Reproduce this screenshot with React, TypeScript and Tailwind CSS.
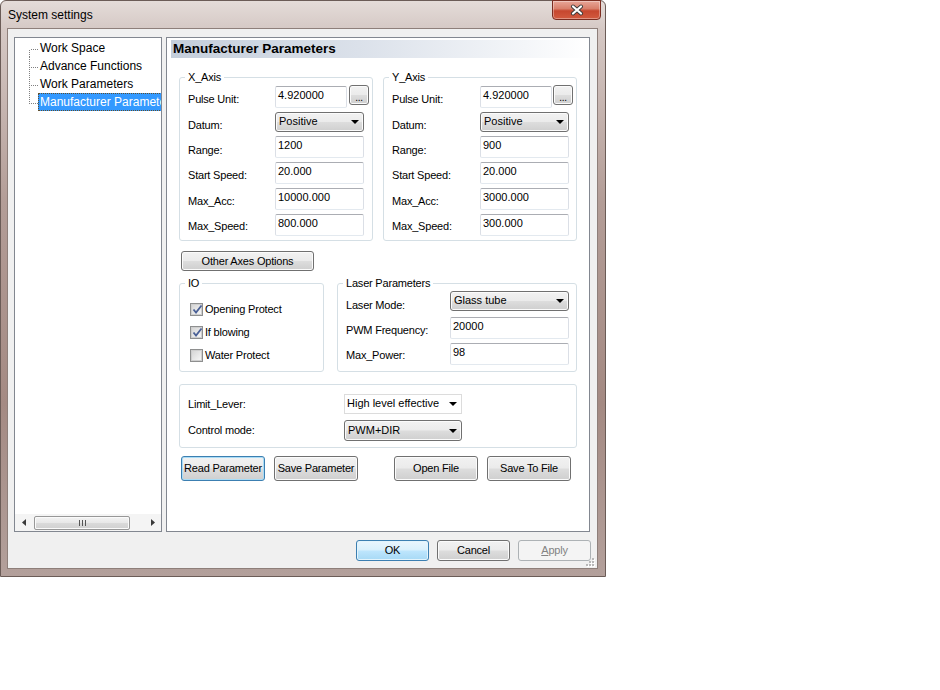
import React from "react";

const btnGray =
  "border border-[#707070] rounded-[3px] bg-[linear-gradient(180deg,#f2f2f2_0%,#ebebeb_48%,#dddddd_52%,#cfcfcf_100%)] shadow-[inset_0_0_0_1px_#fbfbfb]";

function Btn({
  children,
  className = "",
  kind = "normal",
}: {
  children: React.ReactNode;
  className?: string;
  kind?: "normal" | "focus" | "ok" | "disabled";
}) {
  let style = btnGray;
  if (kind === "focus")
    style =
      "border border-[#3c7fb1] rounded-[3px] bg-[linear-gradient(180deg,#f2f2f2_0%,#ebebeb_48%,#dddddd_52%,#cfcfcf_100%)] shadow-[inset_0_0_0_1px_#a9dcf6]";
  if (kind === "ok")
    style =
      "border border-[#3c7fb1] rounded-[3px] bg-[linear-gradient(180deg,#eaf6fd_0%,#d9f0fc_48%,#bee6fd_52%,#a7d9f5_100%)] shadow-[inset_0_0_0_1px_#e3f4fc]";
  if (kind === "disabled")
    style = "border border-[#adb2b5] rounded-[3px] bg-[#f4f4f4] text-[#838383]";
  return (
    <div
      className={`flex shrink-0 items-center justify-center text-[11px] leading-[13px] tracking-[-0.2px] ${style} ${className}`}
    >
      {children}
    </div>
  );
}

function Arrow() {
  return (
    <svg width="8" height="4" viewBox="0 0 8 4" className="shrink-0">
      <path d="M0 0 H8 L4 4 Z" fill="#000" />
    </svg>
  );
}

function Select({
  value,
  className = "",
  flat = false,
}: {
  value: string;
  className?: string;
  flat?: boolean;
}) {
  const look = flat
    ? "border border-[#dcdcdc] bg-white pl-[2px]"
    : "border border-[#707070] rounded-[3px] bg-[linear-gradient(180deg,#f2f2f2_0%,#ebebeb_48%,#dddddd_52%,#cfcfcf_100%)] shadow-[inset_0_0_0_1px_#fbfbfb] pl-[3px]";
  return (
    <div
      className={`flex shrink-0 items-center justify-between pr-[4px] text-[11px] leading-[13px] tracking-normal ${look} ${className}`}
    >
      <span className="mt-[-1px]">{value}</span>
      <Arrow />
    </div>
  );
}

function Input({ value, className = "" }: { value: string; className?: string }) {
  return (
    <div
      className={`h-[22px] shrink-0 rounded-[2px] border border-[#abadb3] border-l-[#dbdfe6] border-r-[#dbdfe6] border-b-[#e3e9ef] bg-white pl-[2px] pt-[2px] text-[11px] leading-[13px] tracking-normal ${className}`}
    >
      {value}
    </div>
  );
}

function Label({ children, w, mt }: { children: React.ReactNode; w: string; mt: string }) {
  return (
    <div className={`shrink-0 whitespace-nowrap leading-[13px] ${w} ${mt}`}>{children}</div>
  );
}

function AxisGroup({
  title,
  labelW,
  btnMl,
  vals,
}: {
  title: string;
  labelW: string;
  btnMl: string;
  vals: string[];
}) {
  return (
    <fieldset className="w-[194px] min-w-0 shrink-0 rounded-[3px] border border-[#d5dfe5] pb-[4px] pl-[8px] pr-[2px] pt-[2px]">
      <legend className="ml-[-3px] px-[3px] leading-[14px]">{title}</legend>
      <div className="flex h-[22px] items-start">
        <Label w={labelW} mt="mt-[7px]">Pulse Unit:</Label>
        <Input value={vals[0]} className="w-[72px]" />
        <Btn className={`mt-[-1px] h-[20px] w-[20px] ${btnMl}`}>
          <span className="mt-[4px] text-[10px]">...</span>
        </Btn>
      </div>
      <div className="mt-[4px] flex h-[20px] items-start">
        <Label w={labelW} mt="mt-[7px]">Datum:</Label>
        <Select value="Positive" className="h-[20px] w-[89px]" />
      </div>
      <div className="mt-[4px] flex h-[22px] items-start">
        <Label w={labelW} mt="mt-[8px]">Range:</Label>
        <Input value={vals[1]} className="w-[89px]" />
      </div>
      <div className="mt-[4px] flex h-[22px] items-start">
        <Label w={labelW} mt="mt-[7px]">Start Speed:</Label>
        <Input value={vals[2]} className="w-[89px]" />
      </div>
      <div className="mt-[4px] flex h-[22px] items-start">
        <Label w={labelW} mt="mt-[7px]">Max_Acc:</Label>
        <Input value={vals[3]} className="w-[89px]" />
      </div>
      <div className="mt-[4px] flex h-[22px] items-start">
        <Label w={labelW} mt="mt-[6px]">Max_Speed:</Label>
        <Input value={vals[4]} className="w-[89px]" />
      </div>
    </fieldset>
  );
}

function Check({ checked }: { checked: boolean }) {
  return (
    <span className="relative flex h-[13px] w-[13px] shrink-0 items-center justify-center border border-[#8e8f8f] bg-[#f4f4f4]">
      <span className="h-[11px] w-[11px] border border-[#cfcfcf] bg-[linear-gradient(135deg,#d6d6d6_0%,#f6f6f6_100%)]" />
      {checked && (
        <svg
          width="11"
          height="11"
          viewBox="0 0 11 11"
          className="absolute left-[1px] top-[0px]"
        >
          <path
            d="M1.5 5.5 L4 8.5 L9.5 1.5"
            fill="none"
            stroke="#4a6096"
            strokeWidth="1.8"
          />
        </svg>
      )}
    </span>
  );
}

function TreeRow({
  label,
  first,
  last,
  selected,
}: {
  label: string;
  first?: boolean;
  last?: boolean;
  selected?: boolean;
}) {
  return (
    <div className="flex h-[18px] items-center whitespace-nowrap pl-[14px]">
      <svg width="9" height="18" viewBox="0 0 9 18" className="shrink-0">
        <line
          x1="0.5"
          y1={first ? 11 : 0}
          x2="0.5"
          y2={last ? 11 : 18}
          stroke="#808080"
          strokeDasharray="1 1"
        />
        <line x1="2" y1="10.5" x2="9" y2="10.5" stroke="#808080" strokeDasharray="1 1" />
      </svg>
      {selected ? (
        <span className="border border-dotted border-[#5f4f2f] bg-[#3399ff] px-[1px] leading-[16px] text-white">
          {label}
        </span>
      ) : (
        <span className="px-[2px] leading-[16px]">{label}</span>
      )}
    </div>
  );
}

function HScroll() {
  return (
    <div className="flex h-[17px] shrink-0 items-center bg-[#f4f4f4]">
      <div className="flex w-[17px] justify-center">
        <svg width="4" height="7" viewBox="0 0 4 7">
          <path d="M4 0 V7 L0 3.5 Z" fill="#3a3a3a" />
        </svg>
      </div>
      <div className="ml-[2px] flex h-[14px] w-[96px] items-center justify-center rounded-[2px] border border-[#979797] bg-[linear-gradient(180deg,#f3f3f3_0%,#e8e8e8_48%,#dadada_52%,#d0d0d0_100%)] shadow-[inset_0_0_0_1px_#fafafa]">
        <svg width="7" height="6" viewBox="0 0 7 6">
          <rect x="0" y="0" width="1" height="6" fill="#555" />
          <rect x="3" y="0" width="1" height="6" fill="#555" />
          <rect x="6" y="0" width="1" height="6" fill="#555" />
        </svg>
      </div>
      <div className="flex-1" />
      <div className="flex w-[17px] justify-center">
        <svg width="4" height="7" viewBox="0 0 4 7">
          <path d="M0 0 V7 L4 3.5 Z" fill="#3a3a3a" />
        </svg>
      </div>
    </div>
  );
}

function Tree() {
  return (
    <div className="flex h-[495px] w-[148px] shrink-0 flex-col border border-[#828790] bg-white">
      <div className="flex-1 overflow-hidden pt-[1px] text-[12px]">
        <TreeRow label="Work Space" first />
        <TreeRow label="Advance Functions" />
        <TreeRow label="Work Parameters" />
        <TreeRow label="Manufacturer Parameters" last selected />
      </div>
      <HScroll />
    </div>
  );
}

function Panel() {
  return (
    <div className="flex h-[495px] w-[424px] shrink-0 flex-col border border-[#828790] bg-white text-[11px] tracking-[-0.2px]">
      <div className="ml-[4px] mr-[1px] mt-[2px] flex h-[18px] items-center bg-[linear-gradient(90deg,#c4cedb_0%,#dbe1ea_45%,#f4f6f9_85%,#ffffff_100%)] pl-[2px] text-[13.5px] font-bold leading-[18px] tracking-normal">
        Manufacturer Parameters
      </div>

      <div className="ml-[12px] mt-[12px] flex gap-[10px]">
        <AxisGroup
          title="X_Axis"
          labelW="w-[87px]"
          btnMl="ml-[2px]"
          vals={["4.920000", "1200", "20.000", "10000.000", "800.000"]}
        />
        <AxisGroup
          title="Y_Axis"
          labelW="w-[88px]"
          btnMl="ml-[1px]"
          vals={["4.920000", "900", "20.000", "3000.000", "300.000"]}
        />
      </div>

      <Btn className="ml-[14px] mt-[10px] h-[20px] w-[133px]">Other Axes Options</Btn>

      <div className="ml-[12px] mt-[5px] flex gap-[13px]">
        <fieldset className="w-[145px] min-w-0 shrink-0 rounded-[3px] border border-[#d5dfe5] px-[8px] pb-[4px] pt-[8px]">
          <legend className="ml-[-3px] px-[3px] leading-[14px]">IO</legend>
          {[
            ["Opening Protect", true],
            ["If blowing", true],
            ["Water Protect", false],
          ].map(([t, c]) => (
            <div key={t as string} className="flex h-[23px] items-center pl-[2px]">
              <Check checked={c as boolean} />
              <span className="ml-[2px] leading-[13px]">{t as string}</span>
            </div>
          ))}
        </fieldset>

        <fieldset className="w-[240px] min-w-0 shrink-0 rounded-[3px] border border-[#d5dfe5] pb-[6px] pl-[8px] pr-[6px] pt-[1px]">
          <legend className="ml-[-3px] px-[3px] leading-[14px]">Laser Parameters</legend>
          <div className="flex h-[20px] items-start">
            <Label w="w-[104px]" mt="mt-[8px]">Laser Mode:</Label>
            <Select value="Glass tube" className="h-[20px] w-[119px]" />
          </div>
          <div className="mt-[6px] flex h-[22px] items-start">
            <Label w="w-[104px]" mt="mt-[7px]">PWM Frequency:</Label>
            <Input value="20000" className="w-[119px]" />
          </div>
          <div className="mt-[4px] flex h-[22px] items-start">
            <Label w="w-[104px]" mt="mt-[6px]">Max_Power:</Label>
            <Input value="98" className="w-[119px]" />
          </div>
        </fieldset>
      </div>

      <div className="ml-[12px] mt-[12px] w-[398px] rounded-[3px] border border-[#d5dfe5] pb-[6px] pl-[8px] pt-[9px]">
        <div className="flex h-[20px] items-center">
          <div className="w-[156px] shrink-0 leading-[13px]">Limit_Lever:</div>
          <Select value="High level effective" flat className="h-[20px] w-[118px]" />
        </div>
        <div className="mt-[6px] flex h-[21px] items-center">
          <div className="w-[156px] shrink-0 leading-[13px]">Control mode:</div>
          <Select value="PWM+DIR" className="h-[21px] w-[118px]" />
        </div>
      </div>

      <div className="ml-[14px] mt-[8px] flex">
        <Btn kind="focus" className="h-[25px] w-[84px]">Read Parameter</Btn>
        <Btn className="ml-[9px] h-[25px] w-[84px]">Save Parameter</Btn>
        <Btn className="ml-[36px] h-[25px] w-[84px]">Open File</Btn>
        <Btn className="ml-[9px] h-[25px] w-[84px]">Save To File</Btn>
      </div>
    </div>
  );
}

function CloseBtn() {
  return (
    <div className="mr-[4px] mt-[-1px] flex h-[20px] w-[49px] items-center justify-center rounded-b-[4px] border border-[#7b2d21] bg-[linear-gradient(180deg,#e8a698_0%,#d9806c_42%,#c6472f_55%,#d25a3f_100%)] shadow-[inset_0_0_0_1px_rgba(255,255,255,0.35)]">
      <svg width="14" height="12" viewBox="0 0 14 12">
        <path d="M3 2.5 L11 9.5 M11 2.5 L3 9.5" stroke="#3b3b3b" strokeWidth="4" strokeLinecap="round" />
        <path d="M3 2.5 L11 9.5 M11 2.5 L3 9.5" stroke="#ffffff" strokeWidth="2.2" strokeLinecap="round" />
      </svg>
    </div>
  );
}

function Grip() {
  const dots = [
    [6, 0],
    [6, 3],
    [3, 3],
    [6, 6],
    [3, 6],
    [0, 6],
  ];
  return (
    <svg width="9" height="9" viewBox="0 0 9 9" className="absolute bottom-[1px] right-[2px]">
      {dots.map(([x, y], i) => (
        <g key={i}>
          <rect x={x + 1} y={y + 1} width="2" height="2" fill="#ffffff" />
          <rect x={x} y={y} width="2" height="2" fill="#b8b8b8" />
        </g>
      ))}
    </svg>
  );
}

export default function App() {
  return (
    <div className="h-[690px] w-[940px] bg-white font-['Liberation_Sans',Arial,sans-serif] text-black">
      <div className="flex h-[577px] w-[606px] flex-col rounded-t-[6px] border border-[#6b5c57] bg-[linear-gradient(180deg,#e4dcd9_0%,#d5c8c4_5%,#b39d97_35%,#a48a83_70%,#b3a09b_100%)]">
        <div className="flex h-[27px] shrink-0 items-start justify-between">
          <div className="pl-[7px] pt-[7px] text-[12px] leading-[15px]">System settings</div>
          <CloseBtn />
        </div>
        <div className="flex flex-1 pb-[7px] pl-[6px] pr-[7px]">
          <div className="relative flex flex-1 flex-col border border-[#8e7f7a] bg-[#f0f0f0]">
            <div className="flex gap-[4px] pl-[6px] pt-[8px]">
              <Tree />
              <Panel />
            </div>
            <div className="mt-[8px] flex justify-end gap-[8px] pr-[6px]">
              <Btn kind="ok" className="h-[21px] w-[73px]">OK</Btn>
              <Btn className="h-[21px] w-[73px]">Cancel</Btn>
              <Btn kind="disabled" className="h-[21px] w-[73px]">
                <span>
                  <span className="underline">A</span>pply
                </span>
              </Btn>
            </div>
            <Grip />
          </div>
        </div>
      </div>
    </div>
  );
}
